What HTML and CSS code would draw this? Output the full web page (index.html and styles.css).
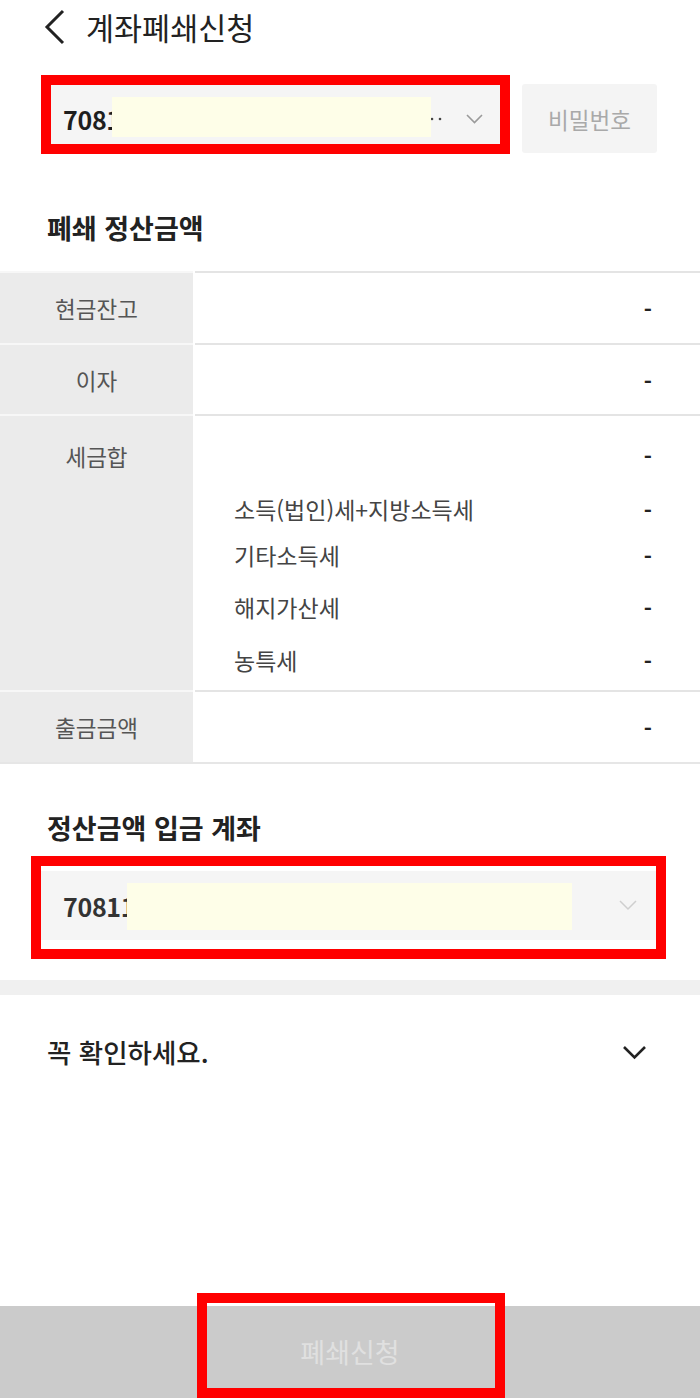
FILE: index.html
```html
<!DOCTYPE html>
<html lang="ko">
<head>
<meta charset="utf-8">
<title>계좌폐쇄신청</title>
<link rel="stylesheet" href="styles.css">
</head>
<body>
<div class="page">
  <header class="topbar">
    <svg class="back" width="22" height="36" viewBox="0 0 22 36"><polyline points="19,2 3,18 19,34" fill="none" stroke="#222" stroke-width="3" stroke-linejoin="miter"/></svg>
    <h1 class="title">계좌폐쇄신청</h1>
  </header>

  <div class="acct-row">
    <div class="mark mark-1">
      <div class="select select-1">
        <span class="num num-bold">7081</span>
        <span class="mask mask-1"></span>
        <svg class="more" width="12" height="4" viewBox="0 0 12 4"><circle cx="2" cy="2" r="1.3" fill="#444"/><circle cx="10" cy="2" r="1.3" fill="#444"/></svg>
        <svg class="chev" width="17" height="10" viewBox="0 0 17 10"><polyline points="1,1 8.5,8.5 16,1" fill="none" stroke="#9a9a9a" stroke-width="1.6"/></svg>
      </div>
    </div>
    <button class="pw-btn">비밀번호</button>
  </div>

  <h2 class="sec-title first">폐쇄 정산금액</h2>

  <div class="table">
    <div class="row">
      <div class="th">현금잔고</div>
      <div class="td"><span class="val">-</span></div>
    </div>
    <div class="row">
      <div class="th">이자</div>
      <div class="td"><span class="val">-</span></div>
    </div>
    <div class="row row-tax">
      <div class="th th-top">세금합</div>
      <div class="td td-tax">
        <div class="line main"><span></span><span class="val">-</span></div>
        <div class="line sub s1"><span>소득(법인)세+지방소득세</span><span class="val">-</span></div>
        <div class="line sub s2"><span>기타소득세</span><span class="val">-</span></div>
        <div class="line sub s3"><span>해지가산세</span><span class="val">-</span></div>
        <div class="line sub s4"><span>농특세</span><span class="val">-</span></div>
      </div>
    </div>
    <div class="row row-last">
      <div class="th">출금금액</div>
      <div class="td"><span class="val">-</span></div>
    </div>
  </div>

  <h2 class="sec-title second">정산금액 입금 계좌</h2>

  <div class="mark mark-2">
    <div class="select select-2">
      <span class="num num-semi">70811</span>
      <span class="mask mask-2"></span>
      <svg class="chev chev-2" width="18" height="11" viewBox="0 0 18 11"><polyline points="1,1 9,9 17,1" fill="none" stroke="#cfcfcf" stroke-width="1.5"/></svg>
    </div>
  </div>

  <div class="band"></div>

  <div class="notice">
    <span class="notice-text">꼭 확인하세요.</span>
    <svg width="25" height="15" viewBox="0 0 25 15"><polyline points="2,2 12.5,12.5 23,2" fill="none" stroke="#222" stroke-width="2.6"/></svg>
  </div>

  <div class="bottom-bar">
    <span class="bottom-text">폐쇄신청</span>
    <div class="bottom-mark"></div>
  </div>
</div>
</body>
</html>
```

FILE: styles.css
```css
* { box-sizing: border-box; }
html, body { margin: 0; padding: 0; background: #fff; }
body {
  font-family: "Noto Sans CJK KR", "Noto Sans", sans-serif;
  color: #222;
}
.page {
  width: 700px;
  height: 1398px;
  display: flex;
  flex-direction: column;
  overflow: hidden;
}
.topbar {
  height: 54px;
  display: flex;
  align-items: center;
  padding-left: 44px;
}
.back { display: block; }
.title {
  margin: 0 0 0 20px;
  font-size: 30.5px;
  font-weight: 400;
  line-height: 40px;
  color: #222;
}
.acct-row {
  margin-top: 21px;
  padding-left: 41px;
  display: flex;
  align-items: flex-start;
}
.mark {
  border: 10px solid #ff0000;
}
.mark-1 {
  width: 469px;
  height: 79px;
}
.select {
  position: relative;
  background: #f5f5f5;
  display: flex;
  align-items: center;
}
.select-1 {
  height: 100%;
  padding: 8px 17px 0 12px;
}
.num {
  font-size: 25px;
  line-height: 30px;
  letter-spacing: -0.3px;
}
.num-bold { font-weight: 700; color: #1e1e1e; }
.num-semi { font-weight: 600; color: #333; }
.mask {
  position: absolute;
  background: #fefee8;
}
.mask-1 { left: 61px; top: 12px; width: 319px; height: 40px; }
.more {
  margin-left: auto;
  display: block;
}
.chev { margin-left: 24px; display: block; }
.pw-btn {
  margin: 9px 0 0 12px;
  width: 135px;
  height: 69px;
  border: none;
  border-radius: 3px;
  background: #f4f4f4;
  color: #a9a9a9;
  font-family: "Noto Sans CJK KR", sans-serif;
  font-size: 22.5px;
  padding: 0;
}
.sec-title {
  margin: 0;
  padding: 0 47px;
  font-size: 27px;
  font-weight: 700;
  line-height: 36px;
  color: #222;
}
.sec-title.first { margin-top: 56px; margin-bottom: 25px; }
.sec-title.second { margin-top: 46px; margin-bottom: 10px; }

.table {
  border-bottom: 2px solid #e6e6e6;
}
.row {
  display: grid;
  grid-template-columns: 193px 1fr;
  height: 72px;
}
.row:nth-child(2) { height: 71px; }
.row-tax { height: 276px; }
.th {
  background: #ebebeb;
  border-top: 2px solid #f7f7f7;
  display: flex;
  align-items: center;
  justify-content: center;
  font-size: 22.5px;
  color: #555;
}
.th-top {
  align-items: flex-start;
  padding-top: 24px;
}
.td {
  border-top: 2px solid #e4e4e4;
  margin-left: 2px;
  display: flex;
  align-items: center;
  justify-content: flex-end;
  padding-right: 48px;
  font-size: 23px;
  color: #444;
}
.val { color: #222; font-weight: 700; font-size: 22px; }
.td-tax {
  flex-direction: column;
  align-items: stretch;
  justify-content: flex-start;
  padding-top: 24px;
}
.line {
  display: flex;
  justify-content: space-between;
  line-height: 30px;
}
.sub { padding-left: 39px; }
.s1 { margin-top: 24px; }
.s2 { margin-top: 16px; }
.s3 { margin-top: 22px; }
.s4 { margin-top: 23px; }

.mark-2 {
  margin-left: 31px;
  width: 635px;
  height: 103px;
  background: #fff;
}
.select-2 {
  margin-top: 5px;
  height: 69px;
  padding: 0 19px 0 22px;
  background: #f5f5f5;
}
.mask-2 { left: 86px; top: 12px; width: 445px; height: 47px; }
.chev-2 { margin-left: auto; }

.band {
  margin-top: 21px;
  height: 15px;
  background: #f0f0f0;
}
.notice {
  display: flex;
  align-items: center;
  justify-content: space-between;
  padding: 39px 53px 0 47px;
}
.notice-text {
  font-size: 26.5px;
  font-weight: 500;
  line-height: 36px;
  color: #222;
}
.bottom-bar {
  position: relative;
  margin-top: auto;
  height: 92px;
  background: #cbcbcb;
  display: flex;
  align-items: center;
  justify-content: center;
}
.bottom-text {
  font-size: 27px;
  color: #e0e0e0;
  line-height: 36px;
}
.bottom-mark {
  position: absolute;
  left: 197px;
  top: -13px;
  width: 308px;
  height: 105px;
  border: 10px solid #ff0000;
}
```
